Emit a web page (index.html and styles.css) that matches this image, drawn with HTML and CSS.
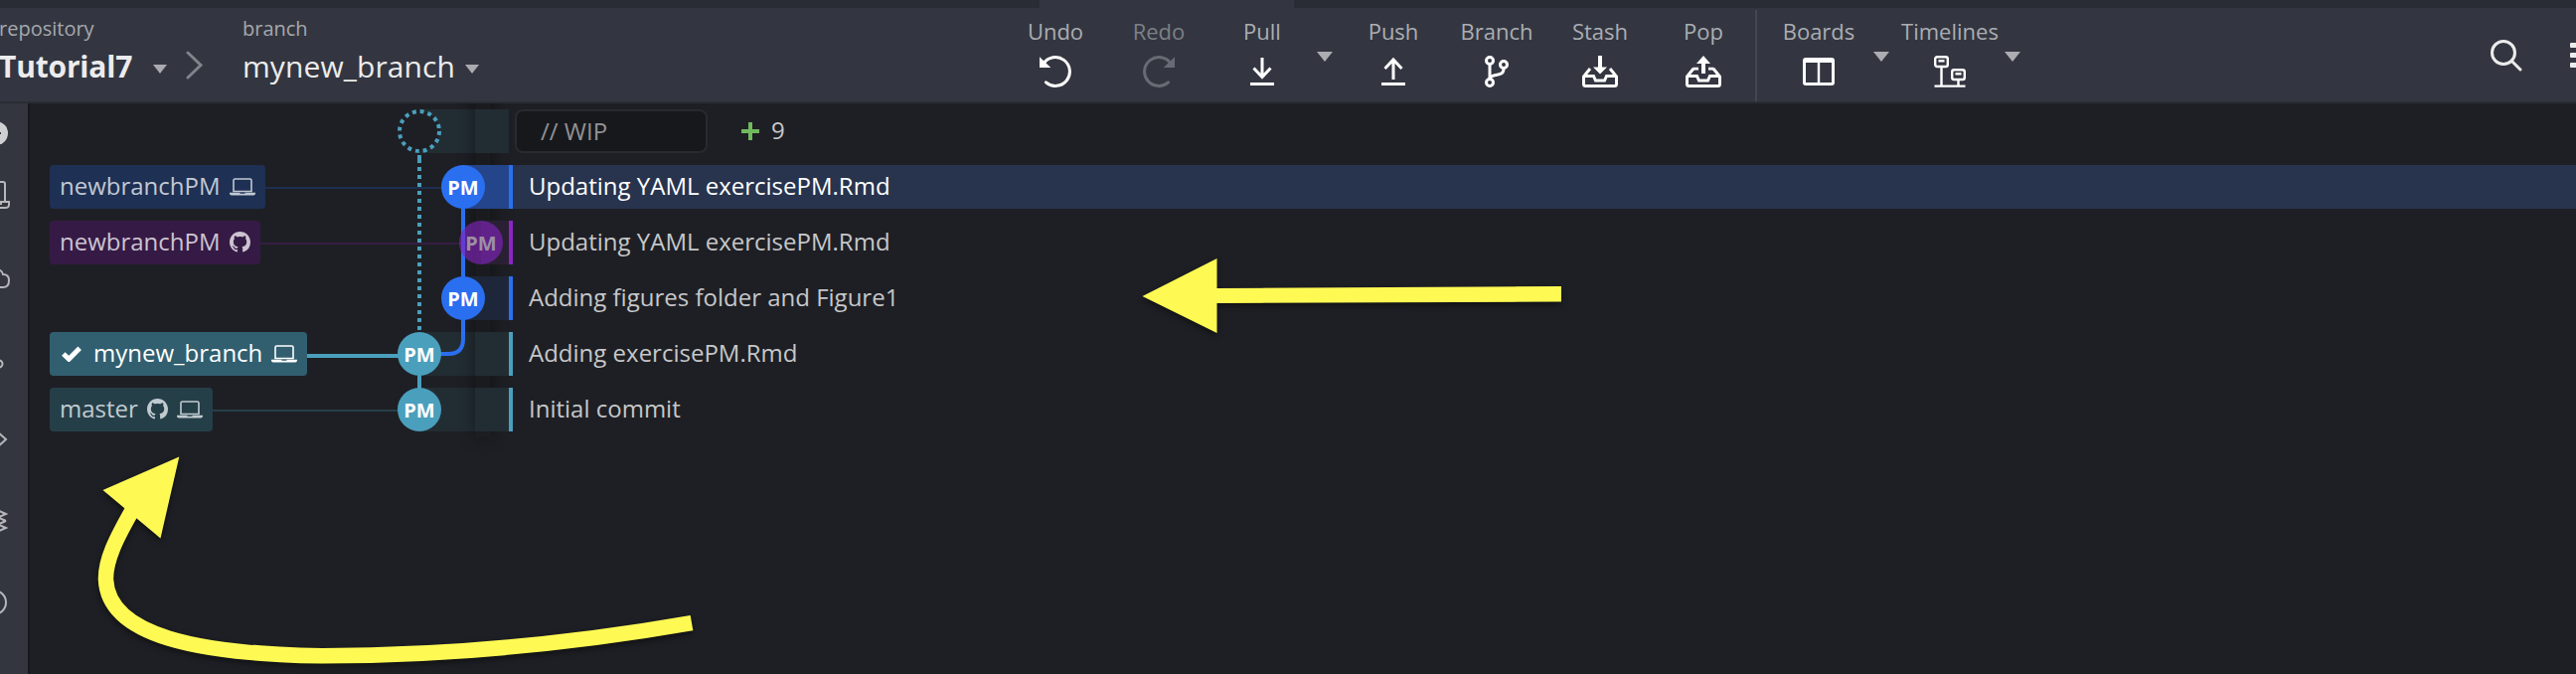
FILE: index.html
```
<!DOCTYPE html>
<html lang="en">
<head>
<meta charset="utf-8">
<title>Tutorial7</title>
<link rel="stylesheet" href="styles.css">
</head>
<body>
<svg class="defs" width="0" height="0">
  <symbol id="laptop" viewBox="0 0 26 18"><path d="M4 13.500V2.500Q4 1 5.500 1H20.500Q22 1 22 2.500V13.500Z" fill="none" stroke="currentColor" stroke-width="1.600"/><path d="M0 14.800H10.500V15.800H15.500V14.800H26V15.500Q26 17.600 22.800 17.600H3.200Q0 17.600 0 15.500Z" fill="currentColor"/></symbol>
  <symbol id="github" viewBox="0 0 16 16"><path fill="currentColor" d="M8 0C3.58 0 0 3.58 0 8c0 3.54 2.29 6.53 5.47 7.59.4.07.55-.17.55-.38 0-.19-.01-.82-.01-1.49-2.01.37-2.53-.49-2.69-.94-.09-.23-.48-.94-.82-1.13-.28-.15-.68-.52-.01-.53.63-.01 1.08.58 1.23.82.72 1.21 1.87.87 2.33.66.07-.52.28-.87.51-1.07-1.78-.2-3.64-.89-3.64-3.95 0-.87.31-1.59.82-2.15-.08-.2-.36-1.02.08-2.12 0 0 .67-.21 2.2.82.64-.18 1.32-.27 2-.27s1.36.09 2 .27c1.53-1.04 2.2-.82 2.2-.82.44 1.1.16 1.92.08 2.12.51.56.82 1.27.82 2.15 0 3.07-1.87 3.75-3.65 3.95.29.25.54.73.54 1.48 0 1.07-.01 1.93-.01 2.2 0 .21.15.46.55.38A8.01 8.01 0 0 0 16 8c0-4.42-3.58-8-8-8z"/></symbol>
  <symbol id="undo" viewBox="0 0 36 32"><path d="M6 8A14.400 14.400 0 1 1 8.500 26.800" fill="none" stroke="currentColor" stroke-width="3" stroke-linecap="round"/><path d="M2 1.300L13.300 12H2Z" fill="currentColor"/></symbol>
  <symbol id="tray" viewBox="0 0 36 32"><path d="M8 13L1.500 21V28.500Q1.500 30.500 3.500 30.500H32.500Q34.500 30.500 34.500 28.500V21L28 13M1.500 20.500H11.500L13.500 25H22.500L24.500 20.500H34.500" fill="none" stroke="currentColor" stroke-width="3"/></symbol>
</svg>

<div class="tabstrip"><div class="tab"></div></div>

<header class="toolbar">
  <div class="crumb repo"><small>repository</small><b>Tutorial7</b></div>
  <svg class="caret-sm" viewBox="0 0 14 9"><path d="M0 0H14L7 9Z"/></svg>
  <svg class="chevron" viewBox="0 0 18 30"><path d="M2 2L15 14.500L2 27"/></svg>
  <div class="crumb"><small>branch</small><span>mynew_branch</span></div>
  <svg class="caret-sm" viewBox="0 0 14 9"><path d="M0 0H14L7 9Z"/></svg>

  <nav class="actions">
    <div class="act"><span>Undo</span><svg><use href="#undo"/></svg></div>
    <div class="act off"><span>Redo</span><svg class="flip"><use href="#undo"/></svg></div>
    <div class="act"><span>Pull</span><svg viewBox="0 0 36 32"><path class="line" d="M18 2V21M9.500 12.500L18 21.500L26.500 12.500"/><path d="M6 27H30V30H6Z"/></svg></div>
    <div class="drop"><svg viewBox="0 0 16 10"><path d="M0 0H16L8 10Z"/></svg></div>
    <div class="act"><span>Push</span><svg viewBox="0 0 36 32"><path class="line" d="M18 24V4M9.500 13L18 4L26.500 13"/><path d="M6 27H30V30H6Z"/></svg></div>
    <div class="act"><span>Branch</span><svg viewBox="0 0 36 32"><g class="line"><circle cx="11" cy="5" r="3.500"/><circle cx="11" cy="27" r="3.500"/><circle cx="25" cy="9" r="3.500"/><path d="M11 9V23M25 13C25 18 22 18.500 17 19.500C13 20.300 11.500 21 11 23"/></g></svg></div>
    <div class="act"><span>Stash</span><svg viewBox="0 0 36 32"><use href="#tray"/><path d="M16 0H20V11.500H25L18 18.500L11 11.500H16Z"/></svg></div>
    <div class="act"><span>Pop</span><svg viewBox="0 0 36 32"><use href="#tray"/><path d="M7.500 11.800H13V14.500H7.500ZM28.500 11.800H23V14.500H28.500Z"/><path d="M18 0L25 8H20V18H16V8H11Z"/></svg></div>
    <div class="rule"></div>
    <div class="act"><span>Boards</span><svg viewBox="0 0 36 32"><path class="line" d="M3.500 5Q3.500 3.500 5 3.500H31Q32.500 3.500 32.500 5V27Q32.500 28.500 31 28.500H5Q3.500 28.500 3.500 27Z"/><path d="M3 3H33V7H3ZM16.800 6H19.200V28H16.800Z"/></svg></div>
    <div class="drop"><svg viewBox="0 0 16 10"><path d="M0 0H16L8 10Z"/></svg></div>
    <div class="act"><span>Timelines</span><svg viewBox="0 0 36 32"><g class="line thin"><rect x="3.200" y="1.200" width="12.600" height="9.800" rx="2"/><rect x="20.200" y="14.200" width="12.600" height="9.800" rx="2"/><path d="M9.500 11V30M26.500 24V30M2.500 30.600H33.500M6.500 5.200H12.500M23.500 18.200H29.500"/></g></svg></div>
    <div class="drop"><svg viewBox="0 0 16 10"><path d="M0 0H16L8 10Z"/></svg></div>
  </nav>

  <svg class="search" viewBox="0 0 32 32"><circle cx="13" cy="13" r="11.500"/><path d="M21.500 21.500L30 30"/></svg>
  <svg class="menu" viewBox="0 0 6 26"><path d="M1 0H6V5H1Q0 5 0 4V1Q0 0 1 0ZM1 10H6V15H1Q0 15 0 14V11Q0 10 1 10ZM1 20H6V25H1Q0 25 0 24V21Q0 20 1 20Z"/></svg>
</header>

<div class="body">
  <aside class="rail">
    <svg viewBox="0 0 28 574">
      <circle class="solid" cx="-4" cy="30" r="12"/><path class="dash" d="M-8 30H1"/>
      <path d="M-12 79H3Q5 79 5 81V99M-12 99H9V102Q9 105 5 105H-12M1 99V102"/>
      <path d="M-10 185H3Q9 185 9 178Q9 172 3 172Q2 167 -4 167"/>
      <circle cx="-1" cy="262" r="3.500"/><path d="M-4 252L-1 258"/>
      <path d="M-4 329L6 338L-4 347"/>
      <path d="M-10 404L-2 409.500L6 413L-2 416.500L-10 420M6 420L-2 423.500L-10 426M-2 416.500L6 420M-2 423.500L6 427L-2 430.500M-2 409.500L6 413"/>
      <circle cx="-6" cy="502" r="12"/>
    </svg>
  </aside>

  <main class="history">
    <svg class="graph" width="516" height="574" viewBox="0 104 516 574">
      <defs><filter id="soft" x="-300%" y="-20%" width="700%" height="140%"><feGaussianBlur stdDeviation="9"/></filter></defs>
      <path d="M422 110H512V154H422ZM422 334H512V378H422ZM422 390H512V434H422Z" fill="#222d33"/>
      <path d="M478 60H494V440H478Z" fill="#0c0d10" opacity=".45" filter="url(#soft)"/>
      <path d="M478 110H502.500V154H478ZM502 110H512V154H502ZM478 334H512V378H478ZM478 390H512V434H478Z" fill="#222d33"/>
      <path d="M466 166H512V210H466Z" fill="#24458a"/>
      <path d="M484 222H512V266H484Z" fill="#2a2034"/>
      <path d="M466 278H512V322H466Z" fill="#1e2739"/>
      <path d="M512 166H516V210H512ZM512 278H516V322H512Z" fill="#2a6ff0"/>
      <path d="M512 222H516V266H512Z" fill="#8a25c4"/>
      <path d="M512 334H516V378H512ZM512 390H516V434H512Z" fill="#4a9fbd"/>
      <path d="M260 188H446V190H260Z" fill="#1d2f52"/>
      <path d="M255 244H466V246H255Z" fill="#351d44"/>
      <path d="M300 356H402V360H300Z" fill="#4a9fbd"/>
      <path d="M210 412H402V414H210Z" fill="#253f49"/>
      <path d="M422 156V164" stroke="#4a9fbd" stroke-width="4"/>
      <path d="M422 168V334" stroke="#4a9fbd" stroke-width="4" stroke-dasharray="4 4"/>
      <path d="M422 370V400" stroke="#4a9fbd" stroke-width="4"/>
      <path d="M466 200V341Q466 356 451 356H440" fill="none" stroke="#2a6ff0" stroke-width="4"/>
      <circle cx="422" cy="132" r="20" fill="#1e1f24" stroke="#4a9fbd" stroke-width="4" stroke-dasharray="3.930 3.930"/>
      <g class="node">
        <circle cx="466" cy="188" r="22" fill="#2a6ff0"/><text x="466" y="195.500">PM</text>
        <g class="faded"><circle cx="484" cy="244" r="22" fill="#7f24ba"/><text x="484" y="251.500">PM</text></g>
        <circle cx="466" cy="300" r="22" fill="#2a6ff0"/><text x="466" y="307.500">PM</text>
        <circle cx="422" cy="356" r="22" fill="#4a9fbd"/><text x="422" y="363.500">PM</text>
        <circle cx="422" cy="412" r="22" fill="#4a9fbd"/><text x="422" y="419.500">PM</text>
      </g>
    </svg>

    <div class="row">
      <div class="refs"></div>
      <div class="wip">// WIP</div>
      <svg class="plus" viewBox="0 0 18 18"><path d="M9 0V18M0 9H18"/></svg><div class="count">9</div>
    </div>
    <div class="row">
      <div class="refs"><span class="tag blue"><span>newbranchPM</span><svg class="lap"><use href="#laptop"/></svg></span></div>
      <div class="msg selected">Updating YAML exercisePM.Rmd</div>
    </div>
    <div class="row">
      <div class="refs"><span class="tag purple"><span>newbranchPM</span><svg class="hub"><use href="#github"/></svg></span></div>
      <div class="msg">Updating YAML exercisePM.Rmd</div>
    </div>
    <div class="row">
      <div class="refs"></div>
      <div class="msg">Adding figures folder and Figure1</div>
    </div>
    <div class="row">
      <div class="refs"><span class="tag current"><svg class="check" viewBox="0 0 20 16"><path d="M1.800 8L7.300 13.200L18.200 2.200"/></svg><span>mynew_branch</span><svg class="lap"><use href="#laptop"/></svg></span></div>
      <div class="msg">Adding exercisePM.Rmd</div>
    </div>
    <div class="row">
      <div class="refs"><span class="tag teal"><span>master</span><svg class="hub"><use href="#github"/></svg><svg class="lap"><use href="#laptop"/></svg></span></div>
      <div class="msg">Initial commit</div>
    </div>
  </main>
</div>

<svg class="arrows" width="2592" height="678" viewBox="0 0 2592 678">
  <path d="M1149.500 298L1224.500 260V290L1571 288V303.500L1224.500 305V335Z" fill="#fffa53"/>
  <path d="M135 510C116 543 106 564 106.500 583C109 640 200 658 324 659.800C450 659.500 580 647 696 626.700" fill="none" stroke="#fffa53" stroke-width="15.500"/>
  <path d="M180.300 459.500L103.500 493L161.500 541.500Z" fill="#fffa53"/>
</svg>
</body>
</html>
```
FILE: styles.css
```
body {
  margin: 0;
  width: 2592px;
  height: 678px;
  overflow: hidden;
  position: relative;
  background: #1e1f24;
  color: #c6c7c9;
  font-family: "Open Sans", sans-serif;
  font-size: 24px;
}
svg { display: block; flex: none; }
.defs { position: absolute; }

.tabstrip { height: 8px; background: #2a2c35; }
.tab { width: 256px; height: 8px; margin-left: 1046px; background: #333640; }

.toolbar {
  display: flex;
  align-items: flex-start;
  height: 94px;
  background: #333640;
  border-bottom: 2px solid #2a2c35;
  white-space: nowrap;
}
.crumb { display: flex; flex-direction: column; width: 224px; margin-left: 39px; }
.crumb small { font-size: 20px; line-height: 28px; margin-top: 7px; color: #a6a8ad; }
.crumb b, .crumb span { font-size: 30px; line-height: 40px; margin-top: 4px; color: #ececed; }
.crumb span { letter-spacing: .1px; }
.crumb.repo { width: 155px; margin-left: -1px; }
.crumb.repo b { letter-spacing: -.2px; }
.caret-sm { width: 14px; height: 9px; margin-top: 57px; fill: #a9abb0; }
.chevron { width: 18px; height: 30px; margin: 43px 0 0 19px; fill: none; stroke: #80838a; stroke-width: 3; stroke-linecap: round; }

.actions { display: flex; margin-left: 528px; }
.act { display: flex; flex-direction: column; align-items: center; width: 104px; color: #fff; }
.act span { font-size: 22px; line-height: 30px; margin-top: 8px; color: #abadb2; }
.act svg { width: 36px; height: 32px; margin-top: 10px; fill: #fff; }
.act .line { fill: none; stroke: #fff; stroke-width: 3; }
.act .thin { stroke-width: 2.4; }
.act.off { color: #686b74; }
.act.off span { color: #7d8087; }
.flip { transform: scaleX(-1); }
.drop { width: 28px; }
.drop svg { width: 16px; height: 10px; margin: 44px 0 0 3px; fill: #abadb2; }
.rule { width: 2px; height: 92px; margin: 2px 10px 0 0; background: #444751; }
.search { width: 32px; height: 32px; margin: 32px 0 0 464px; fill: none; stroke: #ececed; stroke-width: 3; stroke-linecap: round; }
.menu { width: 6px; height: 26px; margin: 35px 0 0 48px; fill: #ececed; }

.body { display: flex; height: 574px; }
.rail { width: 28px; flex: none; background: #33363f; border-right: 2px solid #17181c; }
.rail svg { width: 28px; height: 574px; fill: none; stroke: #b4b6ba; stroke-width: 2; }
.rail .solid { fill: #cfd0d2; stroke: none; }
.rail .dash { stroke: #33363f; }

.history { flex: 1; padding-top: 6px; }
.graph { position: absolute; left: 0; top: 104px; }
.node { font-weight: 700; font-size: 20px; text-anchor: middle; fill: #fff; }
.faded circle { opacity: .65; }
.faded text { fill: #9c8fa3; }

.row { position: relative; display: flex; height: 44px; margin-bottom: 12px; line-height: 41px; white-space: nowrap; }
.refs { width: 466px; padding-left: 20px; flex: none; display: flex; }
.tag { display: flex; gap: 9px; padding: 0 10px; border-radius: 4px; height: 44px; color: #c2c8d2; }
.blue { background: #1e3054; }
.purple { background: #351a45; color: #cdc3d1; }
.current { background: #315f70; color: #fff; }
.teal { background: #253f49; color: #c0cbcf; }
.lap { width: 26px; height: 18px; margin-top: 13px; }
.hub { width: 21px; height: 21px; margin-top: 11px; }
.check { width: 20px; height: 16px; margin: 14px 3px 0 2px; fill: none; stroke: #fff; stroke-width: 5; }
.msg { flex: 1; padding-left: 16px; }
.msg.selected { background: #28344e; color: #fff; }

.wip { box-sizing: border-box; width: 194px; height: 44px; margin-left: 2px; padding-left: 24px; line-height: 39px; background: #17181c; border: 2px solid #292a2f; border-radius: 8px; color: #919294; }
.plus { width: 18px; height: 18px; margin: 13px 12px 0 34px; stroke: #70b95f; stroke-width: 4; }

.arrows { position: absolute; left: 0; top: 0; filter: drop-shadow(0 3px 3px rgba(0, 0, 0, .45)); pointer-events: none; }
```
